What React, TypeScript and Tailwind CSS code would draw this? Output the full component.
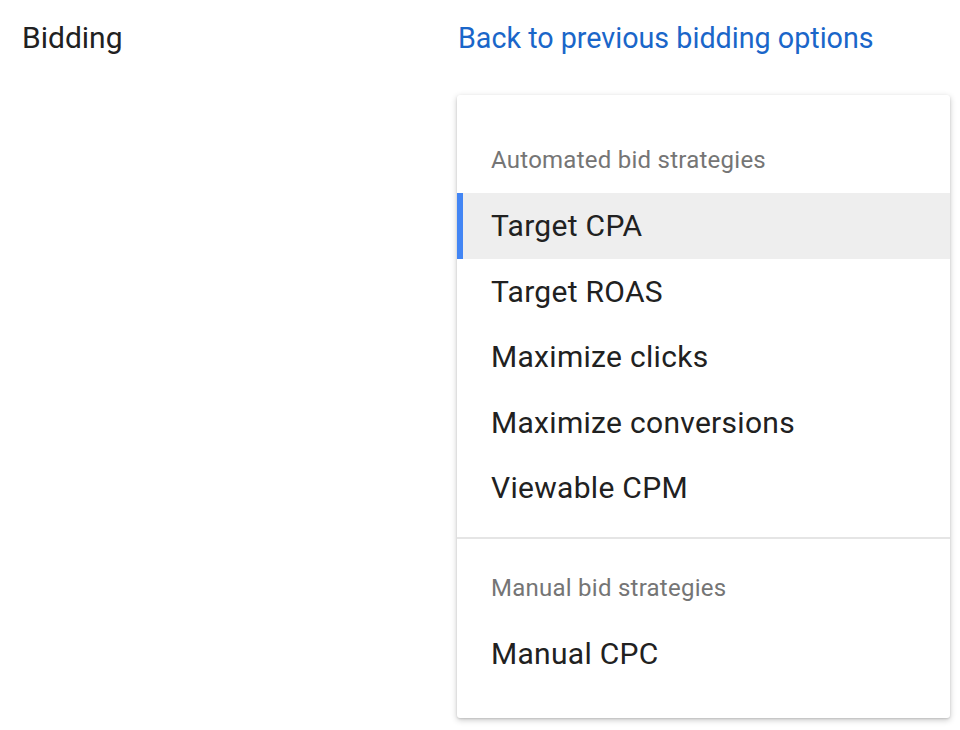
import React from 'react';

interface Group {
  title: string;
  items: string[];
}

const groups: Group[] = [
  {
    title: 'Automated bid strategies',
    items: ['Target CPA', 'Target ROAS', 'Maximize clicks', 'Maximize conversions', 'Viewable CPM'],
  },
  {
    title: 'Manual bid strategies',
    items: ['Manual CPC'],
  },
];

const selected = 'Target CPA';

export default function App() {
  return (
    <div className="w-[960px] h-[730px] bg-white font-['Roboto','Liberation_Sans',sans-serif] overflow-hidden">
      <div className="flex pt-[18px]">
        <div className="w-[457px] pl-[22px] text-[30px] leading-[40px] text-[#212121]">Bidding</div>
        <div className="w-[493px] flex flex-col">
          <a href="#" className="pl-px text-[28.7px] leading-[40px] text-[#1a66c9]">
            Back to previous bidding options
          </a>
          <div className="mt-[37px] bg-white rounded-[3px] shadow-[0_2px_6px_rgba(0,0,0,0.22),0_1px_2px_rgba(0,0,0,0.12)] py-[16px]">
            {groups.map((g, gi) => (
              <div key={g.title} className={`py-[16px] ${gi > 0 ? 'border-t-2 border-[#e5e5e5]' : ''}`}>
                <div className="h-[66px] flex items-center pl-[34px] text-[24px] tracking-[0.25px] text-[#757575]">
                  {g.title}
                </div>
                {g.items.map((item) => (
                  <div
                    key={item}
                    className={`h-[65.5px] flex items-center pl-[28px] text-[30px] tracking-[0.3px] text-[#212121] border-l-[6px] ${
                      item === selected ? 'bg-[#eeeeee] border-[#4285f4]' : 'border-transparent'
                    }`}
                  >
                    {item}
                  </div>
                ))}
              </div>
            ))}
          </div>
        </div>
      </div>
    </div>
  );
}
